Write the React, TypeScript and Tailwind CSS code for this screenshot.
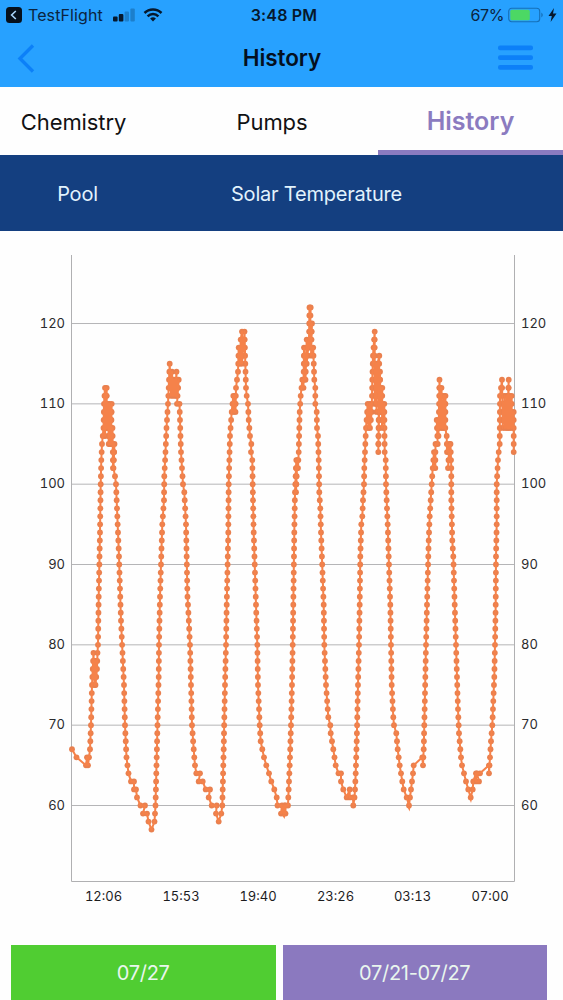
import React from 'react';

// Each day is a list of [x, temperature] turning points
const readings: [number, number][][] = [
  [
    [72, 67], [76.5, 66], [86, 65], [87, 66], [88, 65], [90, 67], [91, 70], [92, 75], [93.5, 79], [94.5, 75], [95.5, 78], [95.5, 75],
    [97, 77], [97.5, 79], [98, 80], [98.7, 86], [100, 94], [100.7, 100], [101.3, 103], [102, 105], [103.5, 107], [104, 110], [105, 112],
    [105, 106], [106.7, 112], [106.7, 107], [108, 110], [108.7, 105], [109.5, 110], [110, 105], [111.7, 110], [111, 105], [112.5, 107],
    [113, 102], [114.5, 105], [113.5, 102], [115, 101], [116, 100], [117, 97], [119, 91], [121, 83], [122.5, 79], [124, 75], [125, 70],
    [126.5, 66], [128.5, 64], [131, 63], [134, 63], [134, 62], [136, 62], [137, 61], [140.5, 60], [145, 60], [143, 59], [147, 59],
    [148.5, 58], [151.5, 57],
  ],
  [
    [154.5, 58], [155.5, 60], [156.5, 65], [157.5, 70], [158.7, 76], [159, 80], [160, 86], [161.5, 92], [162.3, 95], [164, 98], [164.3, 101],
    [165.5, 104], [166.5, 107], [168, 110], [169.7, 115], [171, 111], [172, 114], [173, 111], [174, 113], [175, 111], [176.5, 114],
    [176.5, 111], [178.7, 113], [177, 110], [179.5, 110], [180, 108], [181, 104], [182, 102], [183, 100], [184.3, 99], [186, 95], [187.5, 86],
    [188, 85], [190, 80], [191, 75], [192, 70], [194.3, 66], [195, 65], [196.3, 64], [200, 64], [198.7, 63], [202.7, 63], [205.7, 62],
    [210, 62], [208.7, 61], [211.7, 60], [216.7, 60], [216, 59], [218.7, 58],
  ],
  [
    [221.3, 59], [222.3, 60], [223.7, 67], [225, 75], [226, 80], [226.7, 85], [228.3, 94], [228.7, 100], [230, 106], [231.7, 109],
    [233.3, 111], [234, 109], [235, 111], [235.5, 109], [236, 112], [238, 114], [238.7, 117], [240, 115], [240.7, 118], [242, 119],
    [242, 115], [244.5, 119], [245.3, 115], [246, 112], [246.7, 111], [248, 110], [248.7, 108], [250, 106], [251.3, 105], [251, 104],
    [252.3, 103], [252.7, 100], [253.7, 94], [256, 85], [257.3, 80], [258, 75], [259.7, 70], [260.7, 68], [262.3, 67], [264, 66],
    [266.3, 65], [269, 64], [271.3, 63], [274.3, 62], [276.7, 61], [277.5, 60], [282, 60], [281, 59], [284.5, 60], [283.5, 59], [285.5, 59],
  ],
  [
    [285.5, 60], [288, 60], [288.3, 61], [289.7, 65], [291, 70], [292, 75], [292.7, 80], [293.3, 85], [294.3, 94], [295, 99], [296.3, 103],
    [296, 99], [297.3, 103], [298, 102], [298.7, 104], [299.7, 109], [300.7, 111], [302.3, 113], [303.5, 112], [304, 117], [305.5, 113],
    [306.7, 118], [306.7, 115], [309, 118], [309.5, 122], [310.7, 122], [309.5, 117], [312, 120], [311, 116], [313.2, 117], [314.3, 113], [315.3, 112],
    [315.3, 110], [316.7, 109], [317, 107], [318, 106], [318.7, 103], [319.3, 99], [320.3, 97], [321, 94], [323.7, 85], [324.3, 80],
    [326, 75], [328.3, 71], [330.3, 70], [330.7, 69], [333.3, 67], [335.7, 65], [338.5, 64], [341, 64], [341, 63], [343.3, 62],
    [346.7, 61], [349.7, 62], [349.7, 61], [353, 61], [353.3, 60],
  ],
  [
    [354.5, 61], [355, 62], [355.7, 64], [356.7, 68], [357.3, 71], [358, 75], [359, 80], [359.7, 85], [360.3, 91], [361.3, 95], [362.3, 96],
    [363, 98], [364, 100], [364.3, 102], [365, 104], [366, 107], [367.7, 110], [368.5, 107], [370, 110], [370, 107], [371.7, 109],
    [372.3, 113], [373, 116], [374.7, 119], [374.7, 110], [376, 115], [376.5, 109], [377.5, 115], [379.3, 116], [378.3, 104], [380, 114],
    [380.5, 109], [382.3, 112], [382, 107], [384.3, 110], [384.7, 104], [385.7, 103], [386, 100], [387, 97], [387.7, 95], [388.7, 91],
    [390.3, 85], [391, 80], [391.7, 75], [393.3, 71], [394, 70], [396.3, 69], [397.7, 67], [399.7, 65], [402.3, 63], [403.7, 62],
    [406.7, 61], [409, 60],
  ],
  [
    [410, 61], [411, 62], [413, 64], [413.7, 65], [422.3, 66], [423, 65], [423.7, 67], [424.3, 70], [425, 74], [426, 80], [427, 85],
    [428.3, 91], [428.7, 93], [429.7, 96], [430.7, 98], [431.7, 100], [432.7, 102], [434, 104], [435.3, 102], [435.5, 105], [437.7, 105],
    [436.7, 108], [438.5, 106], [439.5, 113], [440.5, 107], [441.5, 112], [442.5, 107], [444, 111], [443.500, 107], [445.5, 111],
    [445.3, 107], [446.7, 106], [447, 104], [449.5, 105], [448, 102], [450.5, 105], [451.3, 102], [451.3, 98], [452.3, 93], [453.3, 91],
    [454.7, 85], [456, 80], [457, 76], [458, 72], [459, 69], [461, 66], [462, 65], [464, 64], [466, 63], [468.3, 62], [470.7, 61],
  ],
  [
    [472.7, 62], [473.3, 63], [476, 64], [476, 63], [479, 63], [477, 64], [480, 64], [489, 65], [489, 64], [490, 66], [491, 68], [492.3, 70],
    [493.3, 73], [494.3, 76], [495, 80], [495.7, 85], [496, 91], [496.7, 95], [496.7, 100], [498, 103], [498.7, 104], [499.7, 105],
    [500, 111], [502, 113], [502.7, 107], [504.7, 111], [505, 107], [507, 111], [507, 107], [508.7, 113], [508.3, 107], [510, 111],
    [509.7, 107], [511.7, 111], [511.7, 107], [513.7, 109], [513.7, 104],
  ],
];

const toY = (temp: number) => 805.5 - (temp - 60) * 8.033;

const points = readings.flat().reduce<[number, number][]>((acc, [x, temp]) => {
  const last = acc[acc.length - 1];
  if (!last) return [[x, temp]];
  const steps = Math.max(1, Math.abs(temp - last[1]));
  for (let i = 1; i <= steps; i++) {
    acc.push([last[0] + ((x - last[0]) * i) / steps, last[1] + ((temp - last[1]) * i) / steps]);
  }
  return acc;
}, []);

const linePoints = points.map(([x, temp]) => `${x},${toY(temp)}`).join(' ');

const yTicks = [60, 70, 80, 90, 100, 110, 120];

const xTicks = [
  { x: 103.5, label: '12:06' },
  { x: 181, label: '15:53' },
  { x: 258, label: '19:40' },
  { x: 335.5, label: '23:26' },
  { x: 412.5, label: '03:13' },
  { x: 490, label: '07:00' },
];

const StatusBar = () => (
  <div className="grid h-[29px] grid-cols-3 items-center pr-1.5 pl-1.5 text-[16px] text-[#0b2440]">
    <div className="flex items-center">
      <svg width="16" height="16" viewBox="0 0 16 16" className="shrink-0">
        <rect width="16" height="16" rx="3.5" fill="#06101c" />
        <path d="M9.8 4 5.6 8l4.2 4" fill="none" stroke="#a9d5fb" strokeWidth="1.6" />
      </svg>
      <span className="ml-1.5 tracking-[0.1px]">TestFlight</span>
      <svg width="23" height="14" viewBox="0 0 23 14" className="ml-2.5 shrink-0">
        <rect x="0" y="8.5" width="4.6" height="5" rx="1" fill="#06182c" />
        <rect x="5.8" y="6" width="4.6" height="7.5" rx="1" fill="#06182c" />
        <rect x="11.6" y="3.5" width="4.4" height="10" rx="1" fill="#1c7fcc" />
        <rect x="17.4" y="0.5" width="4.4" height="13" rx="1" fill="#1c7fcc" />
      </svg>
      <svg width="20" height="14" viewBox="0 0 19 14" className="ml-[7px] shrink-0" fill="none" stroke="#06182c" strokeWidth="2.5">
        <path d="M1 5a12 12 0 0 1 17 0" />
        <path d="M4.1 8.3a7.7 7.7 0 0 1 10.8 0" />
        <path d="M9.5 13.5 6.6 10.6a4.1 4.1 0 0 1 5.8 0z" fill="#06182c" stroke="none" />
      </svg>
    </div>
    <span className="pl-[5px] text-center font-semibold tracking-[0.2px] text-[#06182c]">3:48 PM</span>
    <div className="flex items-center justify-end">
      <span className="tracking-[-0.4px]">67%</span>
      <svg width="36" height="16" viewBox="0 0 36 16" className="ml-1 shrink-0">
        <rect x="0.7" y="1.2" width="31" height="13.6" rx="3" fill="none" stroke="#1670b8" strokeWidth="1.1" />
        <rect x="2.3" y="2.8" width="19.5" height="10.4" rx="1.5" fill="#4cd864" />
        <path d="M33.3 5.5q3 2.5 0 5z" fill="#1670b8" />
      </svg>
      <svg width="9" height="14" viewBox="0 0 9 14" className="ml-1 shrink-0">
        <path d="M6 0 0.5 8h3.3L2.6 14 8.5 5.6H5z" fill="#06182c" />
      </svg>
    </div>
  </div>
);

const TitleBar = () => (
  <div className="grid h-[58px] grid-cols-3 items-center pr-[30px] pl-[17px]">
    <svg width="18" height="29" viewBox="0 0 18 29">
      <path d="M16 1.5 3 14.5l13 13" fill="none" stroke="#0c80f8" strokeWidth="3.4" />
    </svg>
    <h1 className="pl-3.5 text-center text-[22.5px] font-semibold tracking-[-0.1px] text-[#04101f]">History</h1>
    <svg width="35" height="26" viewBox="0 0 35 26" className="justify-self-end" fill="#0c80f8">
      <rect y="0.5" width="35" height="4.8" rx="2" />
      <rect y="10.3" width="35" height="4.8" rx="2" />
      <rect y="20" width="35" height="4.8" rx="2" />
    </svg>
  </div>
);

const HistoryChart = () => (
  <svg width="563" height="714" viewBox="0 231 563 714" className="block text-[13px] tabular-nums">
    {yTicks.map((tick) => (
      <g key={tick} fill="#2b2b2d">
        <line x1="72" x2="514" y1={toY(tick)} y2={toY(tick)} stroke="#b5b5b7" />
        <text x="65" y={toY(tick) + 4} textAnchor="end">{tick}</text>
        <text x="521" y={toY(tick) + 4}>{tick}</text>
      </g>
    ))}
    <path d="M71.5 255v626.5h443V255" fill="none" stroke="#b0b0b2" />
    {points.map(([x, temp], index) => (
      <circle key={index} cx={x} cy={toY(temp)} r="2.9" fill="#e9804f" />
    ))}
    <polyline points={linePoints} fill="none" stroke="#f5824a" strokeWidth="2" strokeLinejoin="round" />
    {/* small tails under the overnight lows */}
    <path d="M282 815l2.5 4 1-4zM407.5 807l2 4.5 1-4.5zM469.5 799l1.5 4 1-4z" fill="#f5824a" />
    {xTicks.map((tick) => (
      <text key={tick.label} x={tick.x} y="900.5" textAnchor="middle" fill="#1c1c1e">{tick.label}</text>
    ))}
  </svg>
);

const App = () => {
  return (
    <div className="flex h-[1000px] w-[563px] flex-col overflow-hidden bg-[#fefefe] font-['Inter',sans-serif]">
      {/* Header */}
      <header className="h-[87px] shrink-0 bg-[#27a1ff]">
        <StatusBar />
        <TitleBar />
      </header>

      {/* Tabs */}
      <nav className="flex h-[68px] shrink-0 text-[22px] text-[#111113]">
        <button className="w-[166px] pt-0.5 pr-[19px] tracking-[-0.1px]">Chemistry</button>
        <button className="w-[212px] pt-0.5 tracking-[-0.1px]">Pumps</button>
        <button className="w-[185px] border-b-[5px] border-[#8b7bc0] pt-1.5 text-[25px] font-semibold text-[#8b7bc0]">History</button>
      </nav>

      {/* Selected series */}
      <div className="flex h-[76px] shrink-0 items-center bg-[#143f80] pt-0.5 text-[20px] tracking-[-0.2px] text-[#e2f3fd]">
        <span className="w-[155px] text-center">Pool</span>
        <span className="w-[323px] text-center">Solar Temperature</span>
      </div>

      <HistoryChart />

      {/* Date range */}
      <div className="flex h-[55px] shrink-0 gap-[7px] pr-4 pl-[11px] text-[20px] tracking-[-0.3px] text-[#e9f6ee]">
        <button className="flex-1 bg-[#50cd32]">07/27</button>
        <button className="flex-1 bg-[#8b79bf]">07/21-07/27</button>
      </div>
    </div>
  );
};

export default App;
